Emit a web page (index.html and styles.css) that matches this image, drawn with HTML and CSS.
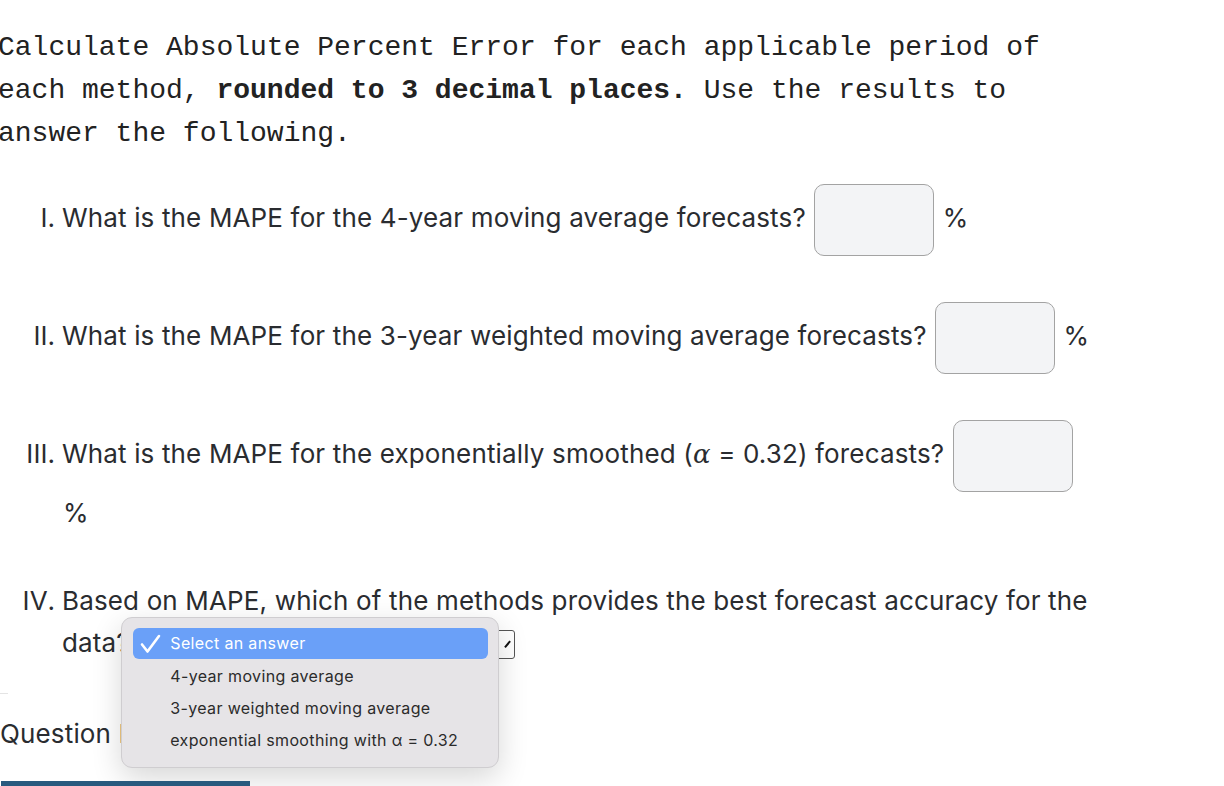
FILE: index.html
```html
<!DOCTYPE html>
<html lang="en">
<head>
  <meta charset="UTF-8">
  <title>MAPE question</title>
  <link rel="stylesheet" href="styles.css">
</head>
<body>
  <div class="page">
    <p class="prompt">Calculate Absolute Percent Error for each applicable period of each method, <b>rounded to 3 decimal places.</b> Use the results to answer the following.</p>

    <ol class="questions">
      <li>What is the MAPE for the 4-year moving average forecasts? <input class="answer" type="text"> <span class="unit">%</span></li>
      <li>What is the MAPE for the 3-year weighted moving average forecasts? <input class="answer" type="text"> <span class="unit">%</span></li>
      <li>What is the MAPE for the exponentially smoothed (<span class="math">α</span> = 0.32) forecasts? <input class="answer" type="text"> <span class="unit">%</span></li>
      <li>Based on MAPE, which of the methods provides the best forecast accuracy for the data?
        <span class="select-wrap">
          <span class="select-box"><span class="chev"></span></span>
          <!-- native menu, opened -->
          <div class="menu">
            <div class="opt selected">
              <svg class="check" width="22" height="20" viewBox="0 0 22 20"><polyline points="2,10.5 7.5,17.5 19,2" fill="none" stroke="#fff" stroke-width="2.6" stroke-linecap="round" stroke-linejoin="round"/></svg>
              Select an answer
            </div>
            <div class="opt">4-year moving average</div>
            <div class="opt">3-year weighted moving average</div>
            <div class="opt">exponential smoothing with α = 0.32</div>
          </div>
        </span>
      </li>
    </ol>

    <div class="rule"></div>
    <div class="help">Question Help</div>
    <div class="bar"></div>
  </div>
</body>
</html>
```

FILE: styles.css
```css
body {
  margin: 0;
  background: #fff;
  overflow: hidden;
}

.page {
  width: 1224px;
  height: 786px;
  box-sizing: border-box;
  padding-top: 26px;
  position: relative;
}

.prompt {
  font-family: "Liberation Mono", "Courier New", monospace;
  font-size: 28px;
  line-height: 43px;
  color: #222;
  margin: 0 0 0 -2px;
  width: 1080px;
}

.questions {
  list-style-type: upper-roman;
  font-family: Inter, "Noto Sans", sans-serif;
  font-size: 26px;
  letter-spacing: 0.15px;
  line-height: 42px;
  color: #2a2c30;
  margin: 29px 0 0 0;
  padding-left: 62px;
  width: 1040px;
}

.questions li {
  margin-bottom: 46px;
}

.math {
  font-family: "DejaVu Serif", serif;
  font-style: italic;
}

.answer {
  box-sizing: border-box;
  width: 120px;
  height: 72px;
  border: 1px solid #a3a3a3;
  border-radius: 10px;
  background: #f3f4f6;
  vertical-align: middle;
  margin: 0 0 0 1px;
  padding: 0;
}

.unit {
  margin-left: 1px;
}

.select-wrap {
  position: relative;
  display: inline-block;
  vertical-align: middle;
}

.select-box {
  display: block;
  box-sizing: border-box;
  width: 378px;
  height: 29px;
  border: 1px solid #555;
  border-radius: 3px;
  background: #fff;
  position: relative;
}

.chev {
  position: absolute;
  right: 5px;
  top: 8px;
  width: 4px;
  height: 8px;
  border-right: 2px solid #111;
  transform: rotate(40deg);
}

.menu {
  position: absolute;
  left: -16px;
  top: -13px;
  width: 378px;
  box-sizing: border-box;
  padding: 10px 10px 11px 11px;
  background: #e6e4e7;
  border: 1px solid #cfcdd0;
  border-radius: 11px;
  box-shadow: 0 10px 30px rgba(0, 0, 0, 0.16);
  font-family: Inter, "Noto Sans", sans-serif;
  font-size: 16px;
  letter-spacing: 0.35px;
  color: #2b2b2b;
}

.opt {
  height: 32px;
  line-height: 32px;
  padding-left: 37px;
  position: relative;
  white-space: nowrap;
}

.opt.selected {
  height: 31px;
  line-height: 31px;
  margin-bottom: 1px;
  background: #6aa0f8;
  color: #fff;
  border-radius: 6px;
}

.check {
  position: absolute;
  left: 7px;
  top: 6px;
}

.rule {
  width: 8px;
  height: 1px;
  background: #e4e4e4;
  margin-top: -17px;
}

.help {
  font-family: Inter, "Noto Sans", sans-serif;
  font-size: 26px;
  letter-spacing: 0.15px;
  line-height: 42px;
  color: #2a2c30;
  margin-top: 19px;
}

.bar {
  position: absolute;
  left: 1px;
  bottom: 0;
  width: 249px;
  height: 5px;
  background: #285a7e;
}
```
